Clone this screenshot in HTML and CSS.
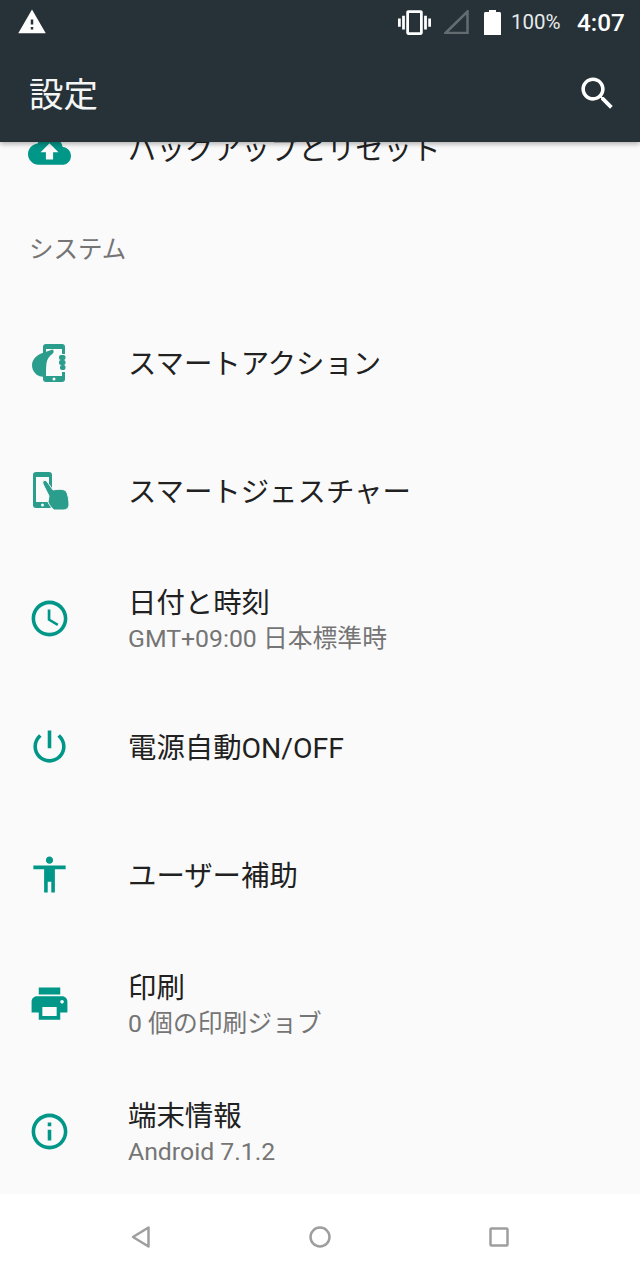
FILE: index.html
```html
<!DOCTYPE html>
<html lang="ja">
<head>
<meta charset="utf-8">
<title>設定</title>
<link rel="stylesheet" href="styles.css">
</head>
<body>
<div class="app">
  <header class="appbar">
    <div class="status">
      <svg class="st-warn" viewBox="0 0 24 24"><path d="M1 21h22L12 2 1 21zm12-3h-2v-2h2v2zm0-4h-2v-4h2v4z"/></svg>
      <div class="status-right">
        <svg class="st-vib" viewBox="0 0 24 24"><path d="M0 15h2V9H0v6zm3 2h2V7H3v10zm19-8v6h2V9h-2zm-3 8h2V7h-2v10zM16.5 3h-9C6.67 3 6 3.67 6 4.5v15c0 .83.67 1.5 1.5 1.5h9c.83 0 1.5-.67 1.5-1.5v-15c0-.83-.67-1.5-1.5-1.5zM16 19H8V5h8v14z"/></svg>
        <svg class="st-signal" viewBox="0 0 25 24"><path d="M1.5 23 L23.5 1.5 V23 Z"/></svg>
        <svg class="st-batt" viewBox="0 0 17 25"><path d="M5 0h7v2h3.5c.8 0 1.5.7 1.5 1.5V25H0V3.500C0 2.700.7 2 1.500 2H5z"/></svg>
        <span class="st-pct">100%</span>
        <span class="st-time">4:07</span>
      </div>
    </div>
    <div class="toolbar">
      <h1 class="tb-title">設定</h1>
      <svg class="tb-search" viewBox="0 0 24 24"><path d="M15.5 14h-.79l-.28-.27C15.41 12.59 16 11.11 16 9.5 16 5.91 13.09 3 9.5 3S3 5.910 3 9.500 5.910 16 9.500 16c1.610 0 3.090-.59 4.230-1.570l.27.280v.79l5 4.990L20.490 19l-4.990-5zm-6 0C7.010 14 5 11.990 5 9.500S7.010 5 9.500 5 14 7.010 14 9.500 11.990 14 9.500 14z"/></svg>
    </div>
  </header>

  <main class="list">
    <div class="row row-first">
      <svg class="icon icon-cloud" viewBox="0 0 24 24"><path d="M19.35 10.04C18.67 6.590 15.64 4 12 4 9.110 4 6.600 5.640 5.350 8.040 2.340 8.360 0 10.910 0 14c0 3.310 2.690 6 6 6h13c2.760 0 5-2.240 5-5 0-2.640-2.050-4.780-4.650-4.960zM14 13v4h-4v-4H7l5-5 5 5h-3z"/></svg>
      <div class="text"><div class="title">バックアップとリセット</div></div>
    </div>

    <div class="section">システム</div>

    <div class="row">
      <svg class="icon icon-soft" viewBox="0 0 43 43">
        <rect x="15" y="3" width="22" height="38" rx="3"/>
        <rect class="hole" x="18" y="8" width="16" height="27"/>
        <circle class="hole" cx="26" cy="38" r="1.500"/>
        <path d="M4 24C4 18 10 13 16 11.500L24.500 8.500C26 9 26 11.500 24.500 12.800C21 15 19 19 18.500 22C18 26 18 30 18 36C14 36 9 35 7 32C5 30 4 27 4 24Z"/>
        <rect class="hole" x="30" y="13" width="8" height="18"/>
        <rect x="31" y="14" width="6.500" height="5" rx="2"/>
        <rect x="31" y="19" width="6.500" height="5" rx="2"/>
        <rect x="32" y="24" width="5.500" height="5" rx="2"/>
      </svg>
      <div class="text"><div class="title">スマートアクション</div></div>
    </div>

    <div class="row">
      <svg class="icon icon-soft" viewBox="0 0 43 43">
        <rect x="5" y="3" width="19" height="36" rx="3"/>
        <rect class="hole" x="8" y="8" width="13" height="25"/>
        <circle class="hole" cx="14.500" cy="36" r="1.500"/>
        <path class="hand" d="M16 11.500C18 11 19 12.500 20 14L25 21C30 20 36 20 38 22C40 25 41 31 41 36C41 39 38 41 36 41L26 41C24 39 21 36 20 33L21 27L15 15C14.500 13 15 12 16 11.500Z"/>
      </svg>
      <div class="text"><div class="title">スマートジェスチャー</div></div>
    </div>

    <div class="row">
      <svg class="icon" viewBox="0 0 24 24"><path d="M11.990 2C6.470 2 2 6.480 2 12s4.470 10 9.990 10C17.520 22 22 17.520 22 12S17.520 2 11.990 2zM12 20c-4.420 0-8-3.580-8-8s3.580-8 8-8 8 3.580 8 8-3.580 8-8 8zm.5-13H11v6l5.250 3.150.75-1.230-4.500-2.670z"/></svg>
      <div class="text">
        <div class="title">日付と時刻</div>
        <div class="sub">GMT+09:00 日本標準時</div>
      </div>
    </div>

    <div class="row">
      <svg class="icon" viewBox="0 0 24 24"><path d="M13 3h-2v10h2V3zm4.830 2.170l-1.420 1.420C17.990 7.860 19 9.810 19 12c0 3.870-3.130 7-7 7s-7-3.130-7-7c0-2.190 1.010-4.140 2.580-5.420L6.170 5.170C4.230 6.820 3 9.260 3 12c0 4.970 4.030 9 9 9s9-4.030 9-9c0-2.740-1.230-5.180-3.170-6.830z"/></svg>
      <div class="text"><div class="title">電源自動ON/OFF</div></div>
    </div>

    <div class="row">
      <svg class="icon" viewBox="0 0 24 24"><path d="M12 2c1.100 0 2 .9 2 2s-.9 2-2 2-2-.9-2-2 .9-2 2-2zm9 7h-6v13h-2v-6h-2v6H9V9H3V7h18v2z"/></svg>
      <div class="text"><div class="title">ユーザー補助</div></div>
    </div>

    <div class="row">
      <svg class="icon" viewBox="0 0 24 24"><path d="M19 8H5c-1.660 0-3 1.340-3 3v6h4v4h12v-4h4v-6c0-1.660-1.340-3-3-3zm-3 11H8v-5h8v5zm3-7c-.55 0-1-.45-1-1s.45-1 1-1 1 .45 1 1-.45 1-1 1zm-1-9H6v4h12V3z"/></svg>
      <div class="text">
        <div class="title">印刷</div>
        <div class="sub">0 個の印刷ジョブ</div>
      </div>
    </div>

    <div class="row">
      <svg class="icon" viewBox="0 0 24 24"><path d="M11 17h2v-6h-2v6zm1-15C6.480 2 2 6.480 2 12s4.480 10 10 10 10-4.480 10-10S17.520 2 12 2zm0 18c-4.410 0-8-3.590-8-8s3.590-8 8-8 8 3.590 8 8-3.590 8-8 8zM11 9h2V7h-2v2z"/></svg>
      <div class="text">
        <div class="title">端末情報</div>
        <div class="sub">Android 7.1.2</div>
      </div>
    </div>
  </main>

  <nav class="navbar">
    <div class="nav-btn"><svg class="nav-icon" viewBox="0 0 26 26"><path d="M19.500 3.500V22.500L4 13Z"/></svg></div>
    <div class="nav-btn"><svg class="nav-icon" viewBox="0 0 26 26"><circle cx="13" cy="13" r="9.500"/></svg></div>
    <div class="nav-btn"><svg class="nav-icon" viewBox="0 0 26 26"><rect x="4.500" y="4.500" width="17" height="17" rx="1"/></svg></div>
  </nav>
</div>
</body>
</html>
```

FILE: styles.css
```css
* { box-sizing: border-box; }
html, body { margin: 0; padding: 0; }
body {
  width: 640px;
  height: 1280px;
  overflow: hidden;
  background: #fafafa;
  font-family: Roboto, "Noto Sans CJK JP", sans-serif;
}
.app {
  display: flex;
  flex-direction: column;
  height: 1280px;
}
.appbar {
  position: relative;
  z-index: 2;
  flex: none;
  height: 142px;
  background: #263238;
  color: #fff;
  box-shadow: 0 2px 5px rgba(0, 0, 0, 0.3);
}
.status {
  display: flex;
  align-items: center;
  justify-content: space-between;
  height: 44px;
  padding: 0 15px 0 17px;
}
.status-right {
  display: flex;
  align-items: center;
}
.st-warn { width: 30px; height: 30px; fill: #fff; }
.st-vib { width: 33px; height: 33px; fill: #fff; margin-right: 13px; }
.st-signal {
  width: 25px;
  height: 24px;
  fill: none;
  stroke: #626c71;
  stroke-width: 2.500;
  margin-right: 15px;
}
.st-batt { width: 17px; height: 25px; fill: #fff; margin-right: 10px; }
.st-pct { font-size: 20.500px; color: #e8eaeb; width: 50px; margin-right: 16px; white-space: nowrap; }
.st-time { font-size: 24.300px; font-weight: 500; width: 48px; white-space: nowrap; }
.toolbar {
  display: flex;
  align-items: center;
  justify-content: space-between;
  height: 98px;
  padding: 0 21px 0 29px;
}
.tb-title {
  margin: 0 0 2px;
  font-size: 34.500px;
  line-height: 44px;
  font-weight: 400;
  font-family: "Noto Sans CJK JP", sans-serif;
  color: #f4f5f5;
}
.tb-search { width: 43px; height: 43px; fill: #fff; }

.list {
  flex: 1;
  min-height: 0;
  overflow: hidden;
}
.row {
  display: flex;
  align-items: center;
  height: 128.200px;
  padding-left: 28px;
}
.row-first { margin-top: -58px; }
.icon {
  flex: none;
  width: 43px;
  height: 43px;
  margin-right: 57px;
  fill: #009688;
}
.icon-cloud { margin-top: 4px; }
.icon-soft { fill: #2a9d8c; }
.icon .hole { fill: #fafafa; }
.icon .hand { stroke: #fafafa; stroke-width: 1; }
.text { padding-top: 5px; }
.title {
  font-size: 28.400px;
  line-height: 36px;
  color: #212121;
  white-space: nowrap;
}
.sub {
  font-size: 24.800px;
  line-height: 34px;
  color: #757575;
  white-space: nowrap;
}
.section {
  height: 85.800px;
  padding: 20px 0 0 29px;
  font-size: 24.500px;
  line-height: 36px;
  color: #757575;
}
.navbar {
  flex: none;
  display: flex;
  justify-content: center;
  align-items: center;
  height: 86px;
  background: #fff;
}
.nav-btn {
  display: flex;
  justify-content: center;
  width: 178.500px;
}
.nav-icon {
  width: 26px;
  height: 26px;
  fill: none;
  stroke: #9e9e9e;
  stroke-width: 2.500;
  stroke-linejoin: round;
}
```
